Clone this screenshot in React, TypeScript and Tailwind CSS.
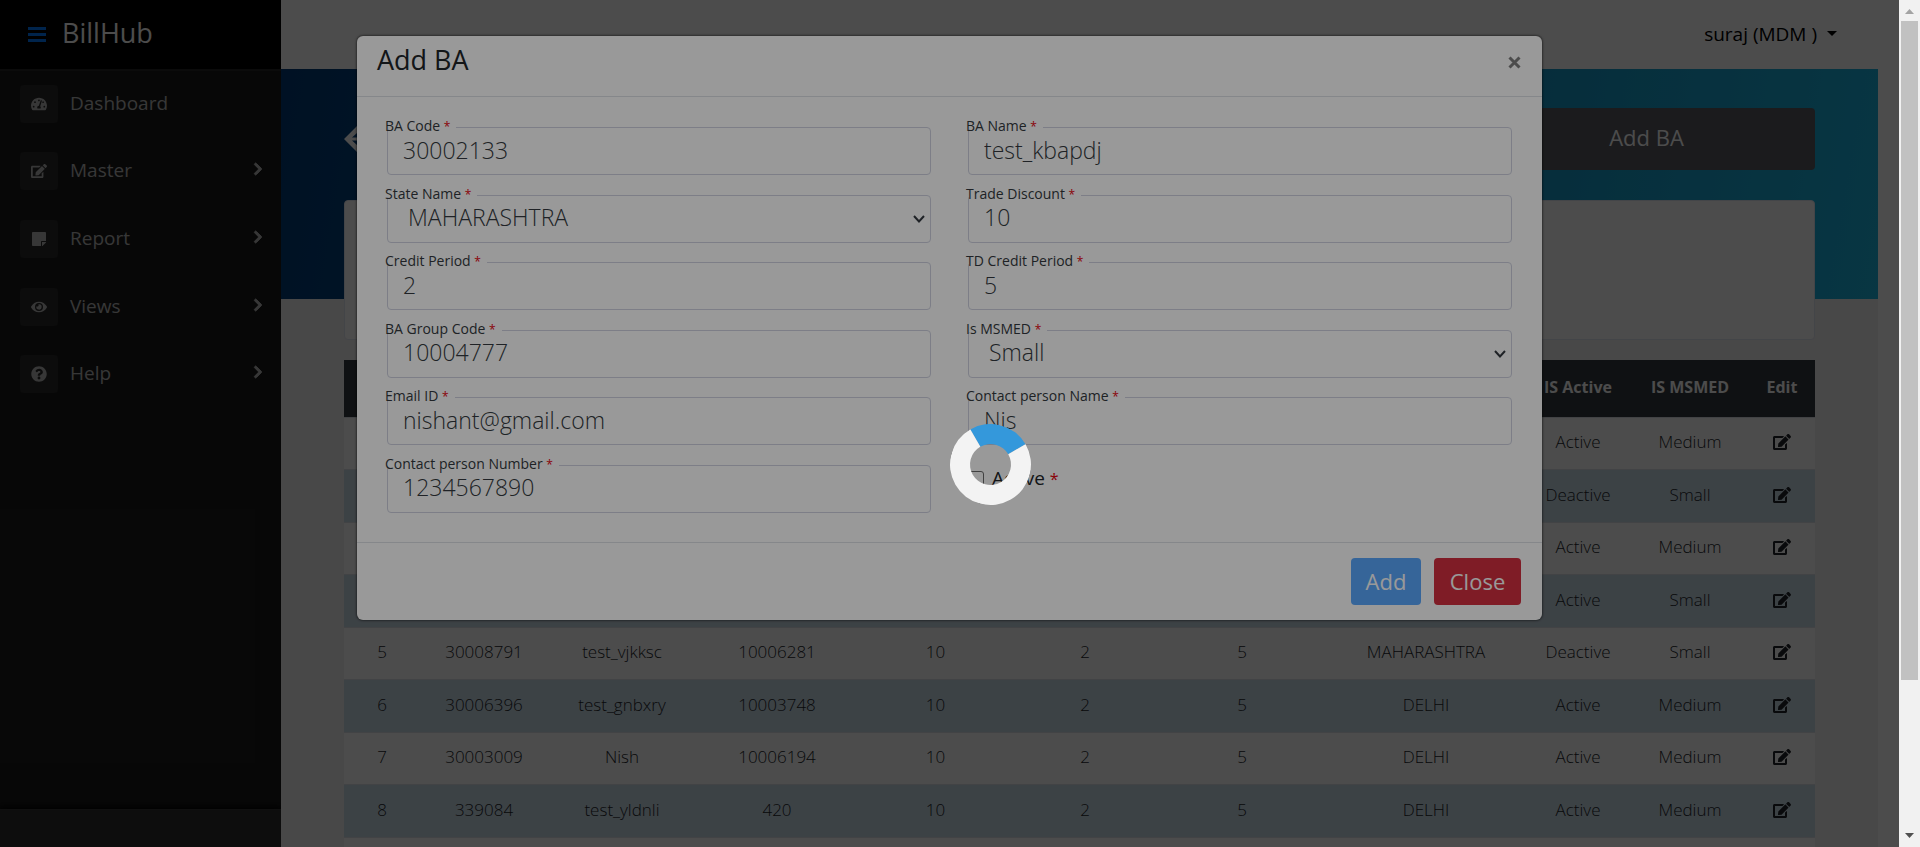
import type { ReactNode } from 'react';
import { FaChevronRight, FaEdit, FaEye, FaQuestionCircle, FaStickyNote, FaTachometerAlt } from 'react-icons/fa';

const navItems: { label: string; icon: ReactNode; nested: boolean }[] = [
  { label: 'Dashboard', icon: <FaTachometerAlt />, nested: false },
  { label: 'Master', icon: <FaEdit />, nested: true },
  { label: 'Report', icon: <FaStickyNote />, nested: true },
  { label: 'Views', icon: <FaEye />, nested: true },
  { label: 'Help', icon: <FaQuestionCircle />, nested: true },
];

const columns = [
  { title: '', width: 76 },
  { title: '', width: 128 },
  { title: '', width: 148 },
  { title: '', width: 162 },
  { title: '', width: 155 },
  { title: '', width: 144 },
  { title: '', width: 170 },
  { title: '', width: 198 },
  { title: 'IS Active', width: 106 },
  { title: 'IS MSMED', width: 118 },
  { title: 'Edit', width: 66 },
];

const rows = [
  ['', '', '', '', '', '', '', '', 'Active', 'Medium'],
  ['', '', '', '', '', '', '', '', 'Deactive', 'Small'],
  ['', '', '', '', '', '', '', '', 'Active', 'Medium'],
  ['', '', '', '', '', '', '', '', 'Active', 'Small'],
  ['5', '30008791', 'test_vjkksc', '10006281', '10', '2', '5', 'MAHARASHTRA', 'Deactive', 'Small'],
  ['6', '30006396', 'test_gnbxry', '10003748', '10', '2', '5', 'DELHI', 'Active', 'Medium'],
  ['7', '30003009', 'Nish', '10006194', '10', '2', '5', 'DELHI', 'Active', 'Medium'],
  ['8', '339084', 'test_yldnli', '420', '10', '2', '5', 'DELHI', 'Active', 'Medium'],
  ['', '', '', '', '', '', '', '', '', ''],
];

const fields: { id: string; label: string; value: string; select?: boolean }[] = [
  { id: 'ba-code', label: 'BA Code', value: '30002133' },
  { id: 'ba-name', label: 'BA Name', value: 'test_kbapdj' },
  { id: 'state-name', label: 'State Name', value: 'MAHARASHTRA', select: true },
  { id: 'trade-discount', label: 'Trade Discount', value: '10' },
  { id: 'credit-period', label: 'Credit Period', value: '2' },
  { id: 'td-credit-period', label: 'TD Credit Period', value: '5' },
  { id: 'ba-group-code', label: 'BA Group Code', value: '10004777' },
  { id: 'is-msmed', label: 'Is MSMED', value: 'Small', select: true },
  { id: 'email', label: 'Email ID', value: 'nishant@gmail.com' },
  { id: 'contact-name', label: 'Contact person Name', value: 'Nis' },
  { id: 'contact-number', label: 'Contact person Number', value: '1234567890' },
];

function Sidebar() {
  return (
    <aside className="flex w-[281px] shrink-0 flex-col bg-[#1b1b1b]">
      <header className="flex h-[71px] items-center gap-4 border-b-2 border-[#272727] bg-black pl-7">
        <button type="button" aria-label="Toggle menu" className="text-[#007bff]">
          <svg viewBox="0 0 18 15" className="h-[15px] w-[18px] fill-current">
            <path d="M0 0h18v3H0zM0 6h18v3H0zM0 12h18v3H0z" />
          </svg>
        </button>
        <span className="pb-1 text-[27px] leading-8 text-white">BillHub</span>
      </header>
      <nav className="grid h-[338px] grid-rows-5">
        {navItems.map((item) => (
          <a key={item.label} href="#" className="flex items-center pr-4 pb-[2px] pl-5 text-[19px] text-[#b8b8b8]">
            <span className="flex size-[38px] items-center justify-center rounded bg-[#282828] text-base">{item.icon}</span>
            <span className="flex-1 pb-[2px] pl-3 leading-7">{item.label}</span>
            {item.nested && <FaChevronRight className="mb-1 size-[14px] stroke-current stroke-[36]" />}
          </a>
        ))}
      </nav>
      <footer className="mt-auto h-[38px] border-t border-[#363636] bg-[#2c2c2c] shadow-[0_0_8px_2px_#000]" />
    </aside>
  );
}

function DataTable() {
  return (
    <table className="mt-[20px] w-full table-fixed text-center text-base leading-5 text-[#212529]">
      <colgroup>
        {columns.map((c, i) => (
          <col key={i} style={{ width: c.width }} />
        ))}
      </colgroup>
      <thead className="bg-[#343a40] text-white">
        <tr className="h-[57px]">
          {columns.map((c, i) => (
            <th key={i} className="pb-[2px] font-bold">{c.title}</th>
          ))}
        </tr>
      </thead>
      <tbody className="text-[17px] font-light">
        {rows.map((row, i) => (
          <tr key={i} className="border-t border-[#dee2e6] odd:h-[52px] odd:bg-white even:h-[53px] even:bg-[#cbdce9]">
            {row.map((cell, j) => (
              <td key={j} className="pb-[2px]">{cell}</td>
            ))}
            <td className="pb-1">
              <button type="button" aria-label="Edit" className="align-middle text-[#212529]">
                <FaEdit className="h-4 w-[18px]" />
              </button>
            </td>
          </tr>
        ))}
      </tbody>
    </table>
  );
}

function Page() {
  return (
    <div className="flex h-full overflow-hidden">
      <Sidebar />
      <div className="flex min-w-0 flex-1 flex-col">
        <header className="flex h-[69px] shrink-0 items-center justify-end bg-white pr-[62px]">
          <button type="button" className="flex items-center gap-[10px] pb-[2px] text-[19px] leading-7 text-black">
            suraj (MDM )
            <svg viewBox="0 0 10 5" className="h-[5px] w-[10px] fill-current">
              <path d="M0 0h10L5 5z" />
            </svg>
          </button>
        </header>
        <div className="flex min-h-0 flex-1 bg-white pr-[21px]">
          <main className="min-w-0 flex-1 bg-[#f0f0f3] bg-[linear-gradient(100deg,#003a78,#1cb5e0)] bg-[length:100%_230px] bg-no-repeat px-[63px] pt-[39px]">
            <div className="flex h-[62px] items-center justify-between">
              <a href="#" aria-label="Back">
                <svg viewBox="0 0 30 26" className="h-[26px] w-[30px] fill-white">
                  <path d="M0 13 13 0v7h17v12H13v7zM8 11.500 13 7v4.500zM8 14.500h5V19z" fillRule="evenodd" />
                </svg>
              </a>
              <button type="button" className="h-full w-[337px] rounded bg-[#5a5c62] pb-[3px] text-[22px] text-white">Add BA</button>
            </div>
            <section className="mt-[30px] h-[140px] rounded border border-[#e3e6f0] bg-white" />
            <DataTable />
          </main>
        </div>
      </div>
    </div>
  );
}

function Field({ id, label, value, select }: { id: string; label: string; value: string; select?: boolean }) {
  return (
    <div className="relative pl-[2px]">
      {select ? (
        <>
          <select
            id={id}
            defaultValue={value}
            className="block h-12 w-full appearance-none rounded border border-[#d1d3e2] bg-white px-5 pt-[9px] pb-3 text-[23px] leading-6 font-light text-[#343a40]"
          >
            <option>{value}</option>
          </select>
          <svg viewBox="0 0 12 8" className="absolute top-5 right-[6px] h-2 w-3 fill-none stroke-[#343a40] stroke-2">
            <path d="m1 1 5 5.500L11 1" />
          </svg>
        </>
      ) : (
        <input
          id={id}
          type="text"
          defaultValue={value}
          className="block h-12 w-full rounded border border-[#d1d3e2] bg-white px-[15px] pt-[9px] pb-3 text-[23px] leading-6 font-light text-[#343a40]"
        />
      )}
      <label
        htmlFor={id}
        className="absolute -top-[9px] left-0 bg-[linear-gradient(white,white)] bg-[length:100%_11px] bg-no-repeat pr-[6px] text-sm leading-4 text-[#343a40]"
      >
        {label} <span className="text-xs leading-4 text-red-600">*</span>
      </label>
    </div>
  );
}

function AddDialog() {
  return (
    <div role="dialog" aria-label="Add BA" className="mx-auto mt-9 w-[1185px] max-w-full rounded-md bg-white shadow-[0_0_2px_1px_rgba(0,0,0,0.4)]">
      <header className="flex h-[61px] items-start justify-between border-b border-[#dee2e6] px-5 pt-2">
        <h2 className="text-[27px] leading-8 text-[#212529]">Add BA</h2>
        <button type="button" aria-label="Close dialog" className="mt-3 pr-px text-[#7f7f7f]">
          <svg viewBox="0 0 13 13" className="size-[13px] fill-none stroke-current stroke-3">
            <path d="M1.500 1.500 11.500 11.500M11.500 1.500 1.500 11.500" />
          </svg>
        </button>
      </header>
      <form>
        <div className="grid h-[445px] grid-cols-2 grid-rows-6 gap-x-[35px] pt-[30px] pr-[30px] pb-[10px] pl-7">
          {fields.map((f) => (
            <Field key={f.id} {...f} />
          ))}
          <label className="flex h-7 items-center gap-2 pl-[2px] text-[19px] text-[#212529]">
            <input type="checkbox" className="size-4 appearance-none rounded-[3px] border border-[#6b6b6b] bg-white" />
            <span>
              Active <span className="text-base text-red-600">*</span>
            </span>
          </label>
        </div>
        <footer className="flex h-[78px] items-start justify-end gap-[13px] border-t border-[#dee2e6] px-[21px] pt-[15px] text-[22px] leading-8 text-white">
          <button type="button" className="h-[47px] w-[70px] rounded bg-[#5aa8ff] pb-[2px]">Add</button>
          <button type="button" className="h-[47px] w-[87px] rounded bg-[#d43040] pb-[2px]">Close</button>
        </footer>
      </form>
    </div>
  );
}

function ScrollTrack() {
  return (
    <div className="flex w-[21px] shrink-0 flex-col bg-[#f1f1f1] pr-[2px] pl-[2px]">
      <svg viewBox="0 0 17 21" className="h-[21px] w-[17px] fill-[#a3a3a3]">
        <path d="M4 14 8.500 9 13 14z" />
      </svg>
      <div className="h-7/9 bg-[#c1c1c1]" />
      <svg viewBox="0 0 17 21" className="mt-auto h-[21px] w-[17px] fill-[#505050]">
        <path d="M4 7h9l-4.500 5z" />
      </svg>
    </div>
  );
}

export default function App() {
  return (
    <div className="flex h-screen overflow-hidden font-['Open_Sans','Noto_Sans',sans-serif] font-normal">
      <div className="relative min-w-0 flex-1 overflow-hidden">
        <Page />
        <div className="absolute inset-0 bg-black/50">
          <AddDialog />
        </div>
        <div className="absolute inset-0 bg-black/40">
          <div
            role="status"
            aria-label="Loading"
            className="absolute top-[424px] left-[950px] size-[81px] rotate-15 rounded-full border-[20px] border-[#f3f3f3] border-t-[#3498db]"
          />
        </div>
      </div>
      <ScrollTrack />
    </div>
  );
}
